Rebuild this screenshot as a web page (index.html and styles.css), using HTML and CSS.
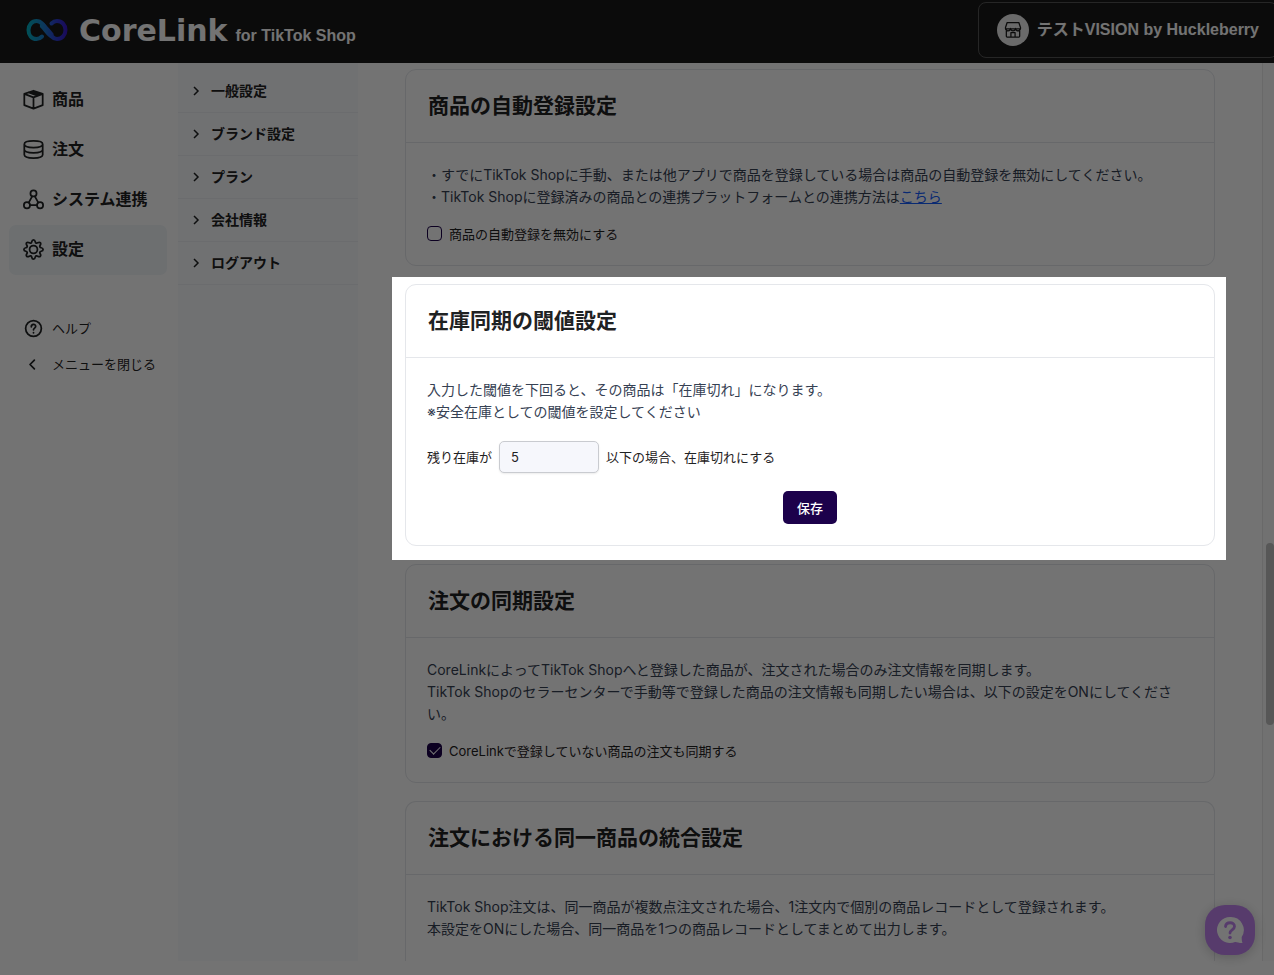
FILE: index.html
```html
<!DOCTYPE html>
<html lang="ja">
<head>
    <meta charset="UTF-8">
    <meta name="viewport" content="width=device-width, initial-scale=1.0">
    <title>CoreLink for TikTok Shop</title>
    <link rel="stylesheet" href="styles.css">
</head>
<body>
    <header class="header">
        <a class="logo" href="#">
            <svg class="logo-mark" viewBox="0 0 42 24" width="42" height="24" fill="none" stroke-linecap="round" aria-hidden="true">
                <defs>
                    <linearGradient id="logoGradient" gradientUnits="userSpaceOnUse" x1="0" y1="0" x2="42" y2="0">
                        <stop offset="0" stop-color="#00b4c0"/>
                        <stop offset="0.45" stop-color="#1e78cc"/>
                        <stop offset="0.65" stop-color="#2a4bd6"/>
                        <stop offset="1" stop-color="#3a12c8"/>
                    </linearGradient>
                </defs>
                <path d="M16 18.500C14.500 20 12.500 21 10.500 21C5.500 21 2.500 17 2.500 12C2.500 7 6 3 10.500 3C20 3 22 21 31 21C36 21 39.500 17 39.500 12C39.500 7 36 3 31 3C28.500 3 27 4 25.500 5.500" stroke="url(#logoGradient)" stroke-width="4"/>
                <path d="M17 8C20 11 21.500 13.500 24.500 16.500" stroke="url(#logoGradient)" stroke-width="6"/>
            </svg>
            <span class="logo-name">CoreLink</span>
            <span class="logo-sub">for TikTok Shop</span>
        </a>
        <button class="account" type="button">
            <span class="avatar">
                <svg viewBox="0 0 24 24" width="20" height="20" fill="none" stroke="#1a1a1a" stroke-width="1.500" stroke-linejoin="round" stroke-linecap="round" aria-hidden="true">
                    <path d="M5 3h14l2 6v1.500H3V9zM4 11v8.500a1 1 0 0 0 1 1h14a1 1 0 0 0 1-1V11M3 10a3 3 0 0 0 6 0a3 3 0 0 0 6 0a3 3 0 0 0 6 0M9.500 20.500v-5.500h5v5.500"/>
                </svg>
            </span>
            テストVISION by Huckleberry
        </button>
    </header>

    <div class="layout">
        <nav class="sidebar">
            <a class="menu-item" href="#">
                <svg class="icon" viewBox="0 0 24 24" aria-hidden="true"><path d="M12 2l10.500 3.500v13L12 22.500 1.500 18.500v-13zM1.500 5.500L12 9.500l10.500-4M12 9.500v13M6.500 4l10 3.500M9 3l10 3.500"/></svg>
                商品
            </a>
            <a class="menu-item" href="#">
                <svg class="icon" viewBox="0 0 24 24" aria-hidden="true"><path d="M1.500 6c0-5 21-5 21 0s-21 5-21 0zM1.500 6v12c0 5 21 5 21 0V6M1.500 12c0 5 21 5 21 0"/></svg>
                注文
            </a>
            <a class="menu-item" href="#">
                <svg class="icon" viewBox="0 0 24 24" aria-hidden="true"><circle cx="12" cy="5" r="3.500"/><circle cx="4.500" cy="18.500" r="3.500"/><circle cx="19.500" cy="18.500" r="3.500"/><path d="M10.500 8.500L6.500 15.500M13.500 8.500l4 7M8 18.500h8"/></svg>
                システム連携
            </a>
            <a class="menu-item active" href="#">
                <svg class="icon" viewBox="0 0 24 24" aria-hidden="true"><circle cx="12" cy="12" r="4.500"/><path d="M10 3.200C10.600 .3 13.400 .3 14 3.200C14.300 4.700 15.500 5.200 16.800 4.400C19.300 2.800 21.200 4.700 19.600 7.200C18.800 8.500 19.300 9.700 20.800 10C23.700 10.600 23.700 13.400 20.800 14C19.300 14.300 18.800 15.500 19.600 16.800C21.200 19.300 19.300 21.200 16.800 19.600C15.500 18.800 14.300 19.300 14 20.800C13.400 23.700 10.600 23.700 10 20.800C9.700 19.300 8.500 18.800 7.200 19.600C4.700 21.200 2.800 19.300 4.400 16.800C5.200 15.500 4.700 14.300 3.200 14C.3 13.400 .3 10.600 3.200 10C4.700 9.700 5.200 8.500 4.400 7.200C2.800 4.700 4.700 2.800 7.200 4.400C8.500 5.200 9.700 4.700 10 3.200z"/></svg>
                設定
            </a>
            <div class="sub-links">
                <a class="sub-link" href="#">
                    <svg class="icon" viewBox="0 0 24 24" aria-hidden="true"><circle cx="12" cy="12" r="9"/><path d="M9.500 10c0-3.500 5-3.500 5-.5 0 2-2.500 2-2.500 4M12 16.700v.2"/></svg>
                    ヘルプ
                </a>
                <a class="sub-link" href="#">
                    <svg class="icon" viewBox="0 0 24 24" aria-hidden="true"><path d="M13 7L8 12l5 5"/></svg>
                    メニューを閉じる
                </a>
            </div>
        </nav>

        <nav class="submenu">
            <a href="#"><svg class="chevron" viewBox="0 0 8 12" aria-hidden="true"><path d="M2 2l4 4-4 4"/></svg>一般設定</a>
            <a href="#"><svg class="chevron" viewBox="0 0 8 12" aria-hidden="true"><path d="M2 2l4 4-4 4"/></svg>ブランド設定</a>
            <a href="#"><svg class="chevron" viewBox="0 0 8 12" aria-hidden="true"><path d="M2 2l4 4-4 4"/></svg>プラン</a>
            <a href="#"><svg class="chevron" viewBox="0 0 8 12" aria-hidden="true"><path d="M2 2l4 4-4 4"/></svg>会社情報</a>
            <a href="#"><svg class="chevron" viewBox="0 0 8 12" aria-hidden="true"><path d="M2 2l4 4-4 4"/></svg>ログアウト</a>
        </nav>

        <main class="content">
            <section class="card">
                <h2>商品の自動登録設定</h2>
                <div class="card-body">
                    <p>・すでにTikTok Shopに手動、または他アプリで商品を登録している場合は商品の自動登録を無効にしてください。<br>・TikTok Shopに登録済みの商品との連携プラットフォームとの連携方法は<a href="#">こちら</a></p>
                    <label class="check"><input type="checkbox">商品の自動登録を無効にする</label>
                </div>
            </section>

            <section class="card spotlight">
                <h2>在庫同期の閾値設定</h2>
                <form class="card-body">
                    <p>入力した閾値を下回ると、その商品は「在庫切れ」になります。<br>※安全在庫としての閾値を設定してください</p>
                    <div class="threshold">
                        <label for="threshold">残り在庫が</label>
                        <input type="text" id="threshold" inputmode="numeric" value="5">
                        <span>以下の場合、在庫切れにする</span>
                    </div>
                    <button class="save" type="button">保存</button>
                </form>
            </section>

            <section class="card">
                <h2>注文の同期設定</h2>
                <div class="card-body">
                    <p>CoreLinkによってTikTok Shopへと登録した商品が、注文された場合のみ注文情報を同期します。<br>TikTok Shopのセラーセンターで手動等で登録した商品の注文情報も同期したい場合は、以下の設定をONにしてください。</p>
                    <label class="check"><input type="checkbox" checked>CoreLinkで登録していない商品の注文も同期する</label>
                </div>
            </section>

            <section class="card card-open">
                <h2>注文における同一商品の統合設定</h2>
                <div class="card-body">
                    <p>TikTok Shop注文は、同一商品が複数点注文された場合、1注文内で個別の商品レコードとして登録されます。<br>本設定をONにした場合、同一商品を1つの商品レコードとしてまとめて出力します。</p>
                </div>
            </section>
        </main>

        <div class="scroll-track"></div>
    </div>

    <div class="scroll-thumb"></div>
    <button class="chat" type="button" aria-label="チャット">
        <svg viewBox="0 0 28 28" width="28" height="28" aria-hidden="true">
            <path d="M14 1a13 13 0 1 0 5 25c1.500-.5 3 1 7.500 1-.8-2-.8-4-.8-6A13 13 0 0 0 14 1z" fill="#fff"/>
            <path d="M9.500 10.500c.5-5 9-5 9 0 0 3.300-4.500 3.500-4.500 6.500" fill="none" stroke="#c084f0" stroke-width="2.800" stroke-linecap="round"/>
            <circle cx="14" cy="21.500" r="1.800" fill="#c084f0"/>
        </svg>
    </button>
</body>
</html>
```
FILE: styles.css
```css
* { box-sizing: border-box; margin: 0; padding: 0; }
body {
    min-height: 100vh;
    display: flex;
    flex-direction: column;
    padding-bottom: 15px;
    overflow: hidden;
    background: #fff;
    color: #1f2223;
    font-family: Inter, "Noto Sans CJK JP", sans-serif;
    font-size: 14px;
    line-height: 22px;
}
button, input { font: inherit; }

/* Header */
.header {
    display: flex;
    justify-content: space-between;
    align-items: center;
    height: 63px;
    padding: 0 0 4px 26px;
    overflow: hidden;
    background: #1a1a1a;
    color: #fff;
}
.logo {
    display: flex;
    align-items: baseline;
    gap: 8px;
    padding-top: 8px;
    color: #fff;
    text-decoration: none;
}
.logo-mark {
    align-self: center;
    margin-bottom: 8px;
}
.logo-name {
    margin-left: 3px;
    font: bold 30px/40px "DejaVu Sans", sans-serif;
}
.logo-sub { font: bold 16px/40px "Liberation Sans", sans-serif; }
.account {
    display: flex;
    align-items: center;
    gap: 8px;
    height: 56px;
    margin-right: -4px;
    padding: 0 18px;
    border: 1px solid #555;
    border-radius: 8px;
    background: none;
    color: #fff;
    font-family: "Liberation Sans", "Noto Sans CJK JP", sans-serif;
    font-size: 16px;
    font-weight: bold;
}
.avatar {
    display: flex;
    align-items: center;
    justify-content: center;
    width: 32px;
    height: 32px;
    border-radius: 50%;
    background: #eaeaea;
}

/* Side navigation */
.layout { flex: 1; display: flex; }
.sidebar {
    flex: 0 0 178px;
    padding: 12px 11px 0 9px;
}
.icon {
    width: 21px;
    height: 21px;
    flex: none;
    fill: none;
    stroke: #1f2223;
    stroke-width: 2;
    stroke-linecap: round;
    stroke-linejoin: round;
}
.menu-item, .sub-link {
    display: flex;
    align-items: center;
    gap: 8px;
    padding: 0 0 2px 14px;
    color: #1f2223;
    text-decoration: none;
    white-space: nowrap;
}
.menu-item {
    height: 50px;
    border-radius: 7px;
    font-size: 16px;
    font-weight: bold;
}
.menu-item.active { background: #f1f5f9; }
.sub-links { margin-top: 36px; }
.sub-link { height: 36px; font-size: 13px; }

.submenu {
    flex: 0 0 180px;
    padding-top: 7px;
    background: #f8fafd;
}
.submenu a {
    display: flex;
    align-items: center;
    gap: 11px;
    height: 43px;
    padding-left: 14px;
    border-bottom: 1px solid #edeff3;
    color: #1f2223;
    font-weight: bold;
    text-decoration: none;
}
.chevron {
    width: 8px;
    height: 12px;
    fill: none;
    stroke: #1f2223;
    stroke-width: 1.5;
}

/* Setting cards */
.content {
    flex: 1;
    display: flex;
    flex-direction: column;
    gap: 18px;
    padding: 6px 47px 0;
}
.card {
    position: relative;
    border: 1px solid #e5e7eb;
    border-radius: 11px;
}
.card-open {
    flex: 1;
    border-bottom: none;
    border-radius: 11px 11px 0 0;
}
.card h2 {
    height: 73px;
    padding-left: 22px;
    border-bottom: 1px solid #e5e7eb;
    font-size: 21px;
    line-height: 72px;
}
.card-body {
    padding: 21px;
    color: #364153;
}
.card-body a { color: #155dfc; }
.check {
    display: flex;
    align-items: center;
    gap: 7px;
    height: 21px;
    margin-top: 15px;
    color: #1f2223;
    font-size: 13px;
}
.check input {
    appearance: none;
    width: 15px;
    height: 15px;
    border: 1px solid #1c014b;
    border-radius: 4px;
}
.check input:checked {
    background: #1c014b;
    display: grid;
    place-items: center;
}
.check input:checked::after {
    content: "";
    width: 5px;
    height: 9px;
    margin-bottom: 3px;
    border: solid #fff;
    border-width: 0 1px 1px 0;
    transform: rotate(45deg);
}
.threshold {
    display: flex;
    align-items: center;
    gap: 7px;
    margin: 18px 0;
    color: #1f2223;
    font-size: 13px;
    line-height: 32px;
}
.threshold input {
    width: 100px;
    height: 32px;
    padding: 0 11px;
    border: 1px solid #c9cbd0;
    border-radius: 5px;
    background: #f6f7fc;
    color: #1f2223;
    box-shadow: 0 1px 2px rgba(0, 0, 0, 0.08);
}
.save {
    display: block;
    height: 33px;
    margin: 0 auto;
    padding: 0 14px;
    border: none;
    border-radius: 5px;
    background: #1c014b;
    color: #fff;
    font-size: 13px;
    font-weight: 500;
}

/* Dims everything around the highlighted card */
.spotlight { z-index: 10; }
.spotlight::before {
    content: "";
    position: absolute;
    inset: -8px -12px -15px -14px;
    box-shadow: 0 0 0 2000px rgba(0, 0, 0, 0.55);
    pointer-events: none;
}

.scroll-track {
    flex: 0 0 12px;
    border-left: 1px solid #e8e8e8;
    background: #fafafa;
}
.scroll-thumb {
    position: fixed;
    top: 543px;
    right: 0;
    width: 8px;
    height: 182px;
    border-radius: 4px;
    background: #c1c1c1;
}
.chat {
    position: fixed;
    right: 19px;
    bottom: 20px;
    display: flex;
    align-items: center;
    justify-content: center;
    width: 50px;
    height: 50px;
    border: none;
    border-radius: 20px;
    background: #c084f0;
    box-shadow: 0 2px 12px rgba(0, 0, 0, 0.2);
}
```
